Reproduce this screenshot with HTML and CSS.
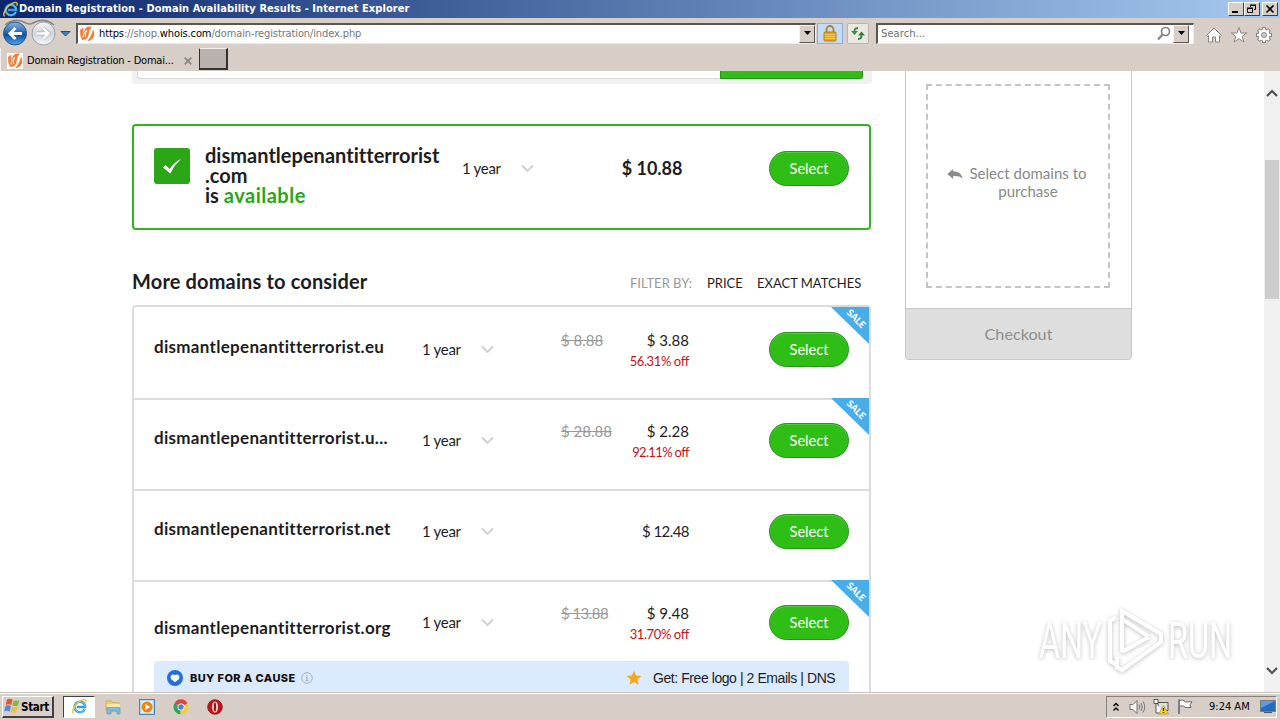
FILE: index.html
```html
<!DOCTYPE html>
<html lang="en">
<head>
<meta charset="utf-8">
<title>Domain Registration - Domain Availability Results</title>
<link rel="stylesheet" href="styles.css">
</head>
<body>
<svg class="defs" width="0" height="0" aria-hidden="true">
  <symbol id="ie" viewBox="0 0 18 18">
    <path d="M14.6 11.6A5.6 5.6 0 1 1 15 9.6H6.2" fill="none" stroke="#2f9be0" stroke-width="2.6"/>
    <path d="M14.6 11.6A5.6 5.6 0 1 1 15 9.6" fill="none" stroke="#8fd6fa" stroke-width=".8"/>
    <path d="M2.8 16.3C-.6 14.6 5.4 4.6 12 2c3.500-1.300 5 .2 3.600 3" fill="none" stroke="#ecc337" stroke-width="1.500"/>
  </symbol>
  <symbol id="whois" viewBox="0 0 16 16">
    <rect width="16" height="16" fill="#fff"/>
    <path d="M1 4 4.500 1.500 4.200 7.500Q6 2 8.500.8L13 .5Q10.500 3 9.700 8 9 12.500 6.500 13.500L3 14Q.8 10 1 4z" fill="#f0803a"/>
    <path d="M14 3.500q1.800 2.500 1.200 6-1 3.500-5 5.500l-1.700-.5q3.500-3.500 5.500-11z" fill="#f0803a"/>
    <path d="M3.800 11.500Q4 8 7.500 4.500 5.800 8 6.500 11" fill="none" stroke="#fff" stroke-width=".9"/>
  </symbol>
  <symbol id="chev" viewBox="0 0 13 9"><path d="m1 1.500 5.500 5.500L12 1.500" fill="none" stroke="#cfcfcf" stroke-width="1.900"/></symbol>
</svg>

<header class="titlebar">
  <svg class="title-icon" width="17" height="17"><use href="#ie"/></svg>
  <span class="title-text">Domain Registration - Domain Availability Results - Internet Explorer</span>
  <div class="win-buttons">
    <span class="win-btn"><svg width="14" height="12"><path d="M3 9h6" stroke="#000" stroke-width="2"/></svg></span>
    <span class="win-btn"><svg width="14" height="12" fill="none" stroke="#000"><path d="M5.500 4V2.500h5v4H9M5 2h6M2.500 5.500h5v4h-5zM2 5h6"/></svg></span>
    <span class="win-btn win-close"><svg width="14" height="12"><path d="m3.500 2.500 7 7m0-7-7 7" stroke="#000" stroke-width="1.700"/></svg></span>
  </div>
</header>

<nav class="navbar">
  <svg class="nav-arrows" width="75" height="30" viewBox="0 0 75 30">
    <defs>
      <linearGradient id="blue" x2="0" y2="1"><stop stop-color="#8ab5e6"/><stop offset=".45" stop-color="#2767b8"/><stop offset=".55" stop-color="#124f9f"/><stop offset="1" stop-color="#4aa5e8"/></linearGradient>
      <linearGradient id="grey" x2="0" y2="1"><stop stop-color="#f8f8f8"/><stop offset=".5" stop-color="#cfd5dc"/><stop offset="1" stop-color="#f5f7fa"/></linearGradient>
    </defs>
    <path d="M5 7Q15-1 26 5q4 2 7 0Q44-1 54 7" fill="none" stroke="#898684" stroke-width="1.600"/>
    <circle cx="15" cy="15.500" r="11.500" fill="url(#blue)" stroke="#315987"/>
    <path d="M22 15.500H10m5.500-5.500-5.500 5.500 5.500 5.500" fill="none" stroke="#fff" stroke-width="3"/>
    <circle cx="43.500" cy="15.500" r="11.500" fill="url(#grey)" stroke="#9a9ea4"/>
    <path d="M36.500 15.500h12M43 10l5.500 5.500L43 21" fill="none" stroke="#a9b0b8" stroke-width="4"/>
    <path d="M36.500 15.500h12M43 10l5.500 5.500L43 21" fill="none" stroke="#fff" stroke-width="2.600"/>
    <path d="M61 13.500h9L65.500 18z" fill="#3f86bd" stroke="#204d78"/>
  </svg>
  <div class="address">
    <svg width="16" height="16"><use href="#whois"/></svg>
    <span class="url"><b>https</b>://shop.<b>whois.com</b>/domain-registration/index.php</span>
    <span class="drop"><svg width="9" height="5"><path d="M1 0h7L4.500 4z"/></svg></span>
  </div>
  <span class="tool lock"><svg width="14" height="17" viewBox="0 0 14 17"><path d="M3.500 8V4.500a3.500 3.500 0 0 1 7 0V8" fill="none" stroke="#a58235" stroke-width="1.800"/><rect x="1" y="7" width="12" height="9" rx="1" fill="#e5a51e" stroke="#ae7b12"/><path d="M1.500 9.500h11m-11 2h11m-11 2h11" stroke="#f6cf60" stroke-width=".8"/></svg></span>
  <span class="tool refresh"><svg width="16" height="15" viewBox="0 0 16 15"><path d="M8 2Q4.500 2 4.500 5.500" fill="none" stroke="#35913a" stroke-width="1.800"/><path d="M1 5h7L4.500 9z" fill="#35913a"/><path d="M8 13q3.500 0 3.500-3.500" fill="none" stroke="#277c2c" stroke-width="1.800"/><path d="M8 9.500h7L11.500 5.500z" fill="#277c2c"/></svg></span>
  <div class="search">
    <span class="search-text">Search...</span>
    <svg width="14" height="15" fill="none"><circle cx="8.500" cy="5.500" r="4" stroke="#858585" stroke-width="1.700"/><path d="m5.500 8.500-4.500 5" stroke="#858585" stroke-width="2.200"/></svg>
    <span class="drop"><svg width="9" height="5"><path d="M1 0h7L4.500 4z"/></svg></span>
  </div>
  <div class="commands">
    <svg width="18" height="18" viewBox="0 0 18 18" fill="#fff" stroke="#858585"><path d="M1.500 9.500 9 2l7.500 7.500-1 1-1-1v6.500h-4v-5h-3v5h-4V9.500l-1 1z"/></svg>
    <svg width="18" height="18" viewBox="0 0 18 18" fill="#fff" stroke="#858585"><path d="m9 1.500 2 5.500h5.700L12.200 10.500l1.700 5.500L9 12.700 4.100 16l1.700-5.500L1.300 7H7z"/></svg>
    <svg width="18" height="18" viewBox="0 0 18 18"><path d="M9 1v16M1 9h16M3.300 3.300l11.400 11.400m0-11.400L3.300 14.700" stroke="#858585" stroke-width="4"/><circle cx="9" cy="9" r="6.400" fill="#858585"/><path d="M9 2v14M2 9h14M4 4l10 10m0-10L4 14" stroke="#fff" stroke-width="2.200"/><circle cx="9" cy="9" r="5.500" fill="#fff"/><circle cx="9" cy="9" r="2.500" fill="#d6cec7" stroke="#858585"/></svg>
  </div>
</nav>

<div class="tabs">
  <div class="tab">
    <svg width="16" height="16"><use href="#whois"/></svg>
    <span class="tab-text">Domain Registration - Domai...</span>
    <svg class="tab-close" width="8" height="8"><path d="m.7.7 6.600 6.600m0-6.600L.7 7.300" stroke="#8a8785" stroke-width="1.900"/></svg>
  </div>
  <span class="new-tab"></span>
</div>

<div class="viewport">
  <main class="results">
    <div class="searchbar"><div class="searchbar-input"></div><div class="searchbar-btn"></div></div>

    <section class="match">
      <span class="match-check"><svg width="20" height="17" viewBox="0 0 20 17"><path d="M1 9.500 3.500 7l4.200 4Q12 4.500 19 .8 12.500 7 8.300 15.500z" fill="#fff"/></svg></span>
      <div class="match-name">dismantlepenantitterrorist<br>.com<br>is <span class="available">available</span></div>
      <div class="term"><span>1 year</span><svg width="13" height="9"><use href="#chev"/></svg></div>
      <div class="match-price">$ 10.88</div>
      <button class="select">Select</button>
    </section>

    <div class="list-head">
      <h2>More domains to consider</h2>
      <span class="filter-label">FILTER BY:</span>
      <span class="filter-price">PRICE</span>
      <span class="filter-exact">EXACT MATCHES</span>
    </div>

    <section class="list">
      <div class="row">
        <div class="name">dismantlepenantitterrorist.eu</div>
        <div class="term"><span>1 year</span><svg width="13" height="9"><use href="#chev"/></svg></div>
        <div class="prices"><s>$ 8.88</s><span class="price">$ 3.88</span><span class="off">56.31% off</span></div>
        <button class="select">Select</button>
        <span class="sale"><span>SALE</span></span>
      </div>
      <div class="row">
        <div class="name">dismantlepenantitterrorist.u...</div>
        <div class="term"><span>1 year</span><svg width="13" height="9"><use href="#chev"/></svg></div>
        <div class="prices"><s>$ 28.88</s><span class="price">$ 2.28</span><span class="off narrow">92.11% off</span></div>
        <button class="select">Select</button>
        <span class="sale"><span>SALE</span></span>
      </div>
      <div class="row">
        <div class="name">dismantlepenantitterrorist.net</div>
        <div class="term"><span>1 year</span><svg width="13" height="9"><use href="#chev"/></svg></div>
        <div class="prices single"><span class="price tight">$ 12.48</span></div>
        <button class="select">Select</button>
      </div>
      <div class="row">
        <div class="name low">dismantlepenantitterrorist.org</div>
        <div class="term"><span>1 year</span><svg width="13" height="9"><use href="#chev"/></svg></div>
        <div class="prices"><s class="tight">$ 13.88</s><span class="price">$ 9.48</span><span class="off">31.70% off</span></div>
        <button class="select">Select</button>
        <span class="sale"><span>SALE</span></span>
      </div>
      <div class="cause">
        <svg width="16" height="16" viewBox="0 0 16 16"><circle cx="8" cy="8" r="8" fill="#2470d8"/><path d="M8 12.200 4 9Q2.800 6.500 4.500 5 6.300 4 8 5 9.700 4 11.500 5q1.700 1.500.5 4z" fill="#fff"/></svg>
        <b>BUY FOR A CAUSE</b>
        <svg class="info" width="12" height="12" fill="none" stroke="#9aaac3"><circle cx="6" cy="6" r="5.300" stroke-width=".9"/><path d="M6 2.800v1.400M4.800 5.500H6v3M4.600 8.700h2.800"/></svg>
        <svg class="star" width="16" height="16" viewBox="0 0 16 16"><path d="m8 .8 2.100 4.800 5.200.5-3.900 3.500 1.100 5.100L8 12l-4.500 2.700 1.100-5.100L.7 6.100l5.200-.5z" fill="#f9a61a"/></svg>
        <span class="perks">Get: Free logo | 2 Emails | DNS</span>
      </div>
    </section>
  </main>

  <aside class="cart">
    <div class="cart-empty">
      <svg width="16" height="11" viewBox="0 0 16 11"><path d="M6 0v2.300q8 0 9.700 7.200Q12 6.600 6 7.200V10L.3 5z" fill="#8a8a8a"/></svg>
      <p>Select domains to purchase</p>
    </div>
    <div class="checkout">Checkout</div>
  </aside>

  <div class="scrollbar">
    <svg width="12" height="8"><path d="M1 7 6 2l5 5" fill="none" stroke="#505050" stroke-width="2.200"/></svg>
    <span class="thumb"></span>
    <svg class="down" width="12" height="8"><path d="m1 1 5 5 5-5" fill="none" stroke="#505050" stroke-width="2.200"/></svg>
  </div>

  <svg class="watermark" width="216" height="76" viewBox="0 0 216 76">
    <g fill="#fff" font-family="Roboto, sans-serif" font-size="50" font-weight="400">
      <text x="8" y="55" textLength="63" lengthAdjust="spacingAndGlyphs">ANY</text>
      <text x="137" y="55" textLength="64" lengthAdjust="spacingAndGlyphs">RUN</text>
    </g>
    <g fill="none" stroke="#fff" stroke-width="4">
      <path d="M91 49V8l39 23v8L91 67l-5-3V54M91 16l26 17M91 49l27-15M85 14l-6 4v40l7 4"/>
    </g>
  </svg>
</div>

<footer class="taskbar">
  <div class="start">
    <svg width="17" height="16" viewBox="0 0 17 16"><path d="M3 1.500q3-1.500 5.500.3L7.300 7Q4.500 5.500 1.700 7z" fill="#e2582b"/><path d="M9.500 2.200q3 1.300 6 0L14 7.500q-3 1.200-5.700 0z" fill="#7fb944"/><path d="M1.500 8q3-1.500 5.500.2l-1.300 5.200Q3 12 .2 13.500z" fill="#4e8bd8"/><path d="M8 8.700q3 1.300 5.800 0l-1.500 5.300q-3 1.200-5.600 0z" fill="#f2bf33"/></svg>
    <b>Start</b>
  </div>
  <div class="task active"><svg width="17" height="17"><use href="#ie"/></svg></div>
  <svg class="ql" width="16" height="16" viewBox="0 0 16 16"><path d="M1 2h5l1 1.500h7V12H1z" fill="#e9cf72" stroke="#c5a74d" stroke-width=".7"/><path d="M2 5h13v4H2z" fill="#f7e9ae"/><path d="M2 8.500h13V15h-3v-3H6v3H2z" fill="#7bbbe0" stroke="#4c95c4" stroke-width=".6"/></svg>
  <svg class="ql" width="16" height="16" viewBox="0 0 16 16"><rect x=".5" y=".5" width="15" height="15" fill="#b8d5ed" stroke="#4d82b5"/><rect x="2.500" y="2" width="11" height="12" fill="#e8f1f8"/><circle cx="8" cy="8" r="5.500" fill="#f08312"/><path d="m6.300 5 5 3-5 3z" fill="#fff"/></svg>
  <svg class="ql" width="16" height="16" viewBox="0 0 16 16"><path d="M8 8 1.500 4.300A7.200 7.200 0 0 1 14.500 4.500z" fill="#dc4639"/><path d="M8 8 1.500 4.300A7.200 7.200 0 0 0 7.500 15.200z" fill="#35a353"/><path d="M8 8l6.500-3.500A7.200 7.200 0 0 1 7.500 15.200z" fill="#f8cb3a"/><circle cx="8" cy="8" r="3.500" fill="#fff"/><circle cx="8" cy="8" r="2.700" fill="#4285dc"/></svg>
  <svg class="ql" width="16" height="16" viewBox="0 0 16 16"><circle cx="8" cy="8" r="7.300" fill="#c01818" stroke="#801010" stroke-width=".8"/><ellipse cx="8" cy="8" rx="2.900" ry="5.500" fill="#f7eaea"/><ellipse cx="8" cy="8" rx="1.200" ry="4.800" fill="#a81010"/></svg>
  <div class="tray">
    <svg width="8" height="10" fill="none" stroke="#000" stroke-width="1.400"><path d="m1.500 4 2.500-2.500L6.500 4m-5 4.500L4 6l2.500 2.500"/></svg>
    <svg class="t-sound" width="17" height="14" fill="none" stroke="#6d6d6d"><path d="M1 4.500h3l4-4v13l-4-4H1z" fill="#fff"/><path d="M10 4.500q1.500 2.500 0 5M12 3q2.500 4 0 8m2-9.500q3.500 5.500 0 11" stroke-width=".9"/></svg>
    <svg class="t-net" width="16" height="16" viewBox="0 0 16 16"><path d="M5 3.500h10v8H5z" fill="#d8dee4" stroke="#555"/><path d="M1 .5h4v4H1zM3 4.500V14h8" fill="#fff" stroke="#555"/><path d="M10.500 6.500 15.500 15h-10z" fill="#ffd02c" stroke="#b28f1a" stroke-width=".7"/><path d="M10.500 9v3m0 1v1" stroke="#222" stroke-width="1.300"/></svg>
    <svg class="t-flag" width="17" height="15" viewBox="0 0 17 15" fill="#fff" stroke="#686868"><path d="M2 1.500q4-1.500 6.500 1.300H15l-2 3 1 2.700H8.500L6.500 7H3"/><path d="M2 .5V15" stroke-width="1.600"/></svg>
    <span class="clock">9:24 AM</span>
    <svg class="t-screen" width="16" height="13"><rect x=".5" y=".5" width="15" height="11" fill="#276bc0" stroke="#747d8a"/><path d="M1 1h14L1 8z" fill="#5b9de0"/><path d="M4 12.500h8" stroke="#555"/></svg>
  </div>
</footer>
</body>
</html>
```
FILE: styles.css
```css
* { box-sizing: border-box; }
body {
  margin: 0; width: 1280px; height: 720px; overflow: hidden;
  display: flex; flex-direction: column; background: #fff; color: #1d1d1f;
  font-family: Lato, "Open Sans", sans-serif;
  font-variant-ligatures: none;
}
svg { display: block; flex: none; }
.defs { position: absolute; }

.titlebar {
  height: 18px; flex: none; display: flex; align-items: center; padding: 0 2px;
  background: linear-gradient(90deg, #0b266d, #a6caf0);
}
.title-text {
  font: bold 11px/18px "DejaVu Sans Condensed", "DejaVu Sans", sans-serif;
  color: #fff; white-space: nowrap; letter-spacing: .07px;
}
.win-buttons { margin-left: auto; display: flex; }
.win-btn {
  width: 16px; height: 14px; background: #d6cec7;
  border: 1px solid; border-color: #fff #404040 #404040 #fff;
}
.win-close { margin-left: 2px; }

.navbar {
  height: 30px; flex: none; display: flex; align-items: center; background: #d6cec7;
  font: 11px/16px "DejaVu Sans Condensed", "DejaVu Sans", sans-serif;
}
.address {
  margin-left: 1px; width: 740px; height: 21px; display: flex; align-items: center; padding-left: 1px;
  background: #fff; border: 1px solid; border-color: #5c5652 #efebe7 #efebe7 #5c5652; border-width: 2px 1px 1px 2px;
}
.url { margin-left: 4px; color: #777; letter-spacing: -.12px; white-space: nowrap; }
.url b { font-weight: normal; color: #000; }
.drop {
  margin-left: auto; width: 16px; height: 18px; display: flex; align-items: center; justify-content: center;
  background: #d6cec7; border: 1px solid; border-color: #f4f1ee #5c5652 #5c5652 #f4f1ee;
}
.tool { display: flex; align-items: center; justify-content: center; height: 21px; }
.lock { margin-left: 1px; width: 26px; background: #c5dcf7; border: 1px solid #86b2e6; }
.refresh { margin-left: 4px; width: 22px; background: #ebe8e4; border: 1px solid #bbb4ae; border-radius: 2px; }
.search {
  margin-left: 7px; width: 318px; height: 21px; display: flex; align-items: center; padding: 0 4px 0 3px;
  background: #fff; border: 1px solid; border-color: #5c5652 #efebe7 #efebe7 #5c5652; border-width: 2px 1px 1px 2px;
}
.search-text { color: #6d6d6d; margin-right: auto; letter-spacing: .1px; }
.search .drop { margin-left: 2px; }
.commands { display: flex; gap: 7px; margin-left: 11px; padding-top: 4px; }

.tabs { height: 23px; flex: none; display: flex; background: #d6cec7; }
.tab {
  width: 198px; height: 23px; display: flex; align-items: center; padding: 2px 0 0 6px;
  border-left: 1px solid #f4f1ee;
  font: 11px/16px "DejaVu Sans Condensed", "DejaVu Sans", sans-serif; color: #000;
}
.tab-text { margin-left: 4px; width: 157px; white-space: nowrap; letter-spacing: -.2px; }
.new-tab {
  margin-left: 1px; width: 29px; height: 22px; background: #b9b1ab;
  border: 1px solid; border-color: #f4f1ee #35302d #35302d #35302d; border-width: 1px 2px 2px 1px;
}

.viewport { height: 621px; flex: none; position: relative; display: flex; overflow: hidden; }
.results { width: 739px; margin-left: 132px; flex: none; }
.searchbar { height: 13px; width: 740px; padding: 0 9px 5px 5px; background: #f1f1f1; display: flex; border-radius: 0 0 3px 3px; }
.searchbar-input { width: 583px; background: #fff; border: 1px solid #d8d8d8; border-top: 0; border-right: 0; border-radius: 0 0 0 3px; }
.searchbar-btn { width: 143px; background: #2fbe16; border: 1px solid #26921a; border-top: 0; border-radius: 0 0 3px 0; }

.match {
  margin-top: 40px; height: 106px; border: 2px solid #31b41f; border-radius: 4px;
  display: flex; align-items: flex-start; padding: 22px 20px 0;
}
.match-check {
  width: 36px; height: 36px; flex: none; border-radius: 3px; background: #2aa616;
  display: flex; align-items: center; justify-content: center;
}
.match-name { margin: -3px 0 0 15px; width: 257px; font-weight: 700; font-size: 20px; line-height: 20px; letter-spacing: .02px; white-space: nowrap; }
.available { color: #2aa616; letter-spacing: .5px; }
.term { display: flex; align-items: center; justify-content: space-between; width: 71.5px; height: 20px; font-size: 15px; line-height: 20px; letter-spacing: -.3px; }
.term span { padding-bottom: 1px; }
.match .term { margin-top: 10px; }
.match-price { width: 149px; margin-top: 10px; text-align: right; font-weight: 700; font-size: 18px; line-height: 20px; }
.select {
  width: 80px; height: 35px; padding: 0 0 1px; border: 1px solid #259416; border-radius: 18px;
  background: #2fbe16; box-shadow: inset 0 1px #57cc43; color: #fff; font: 14.6px Lato, sans-serif;
}
.match .select { margin: 3px 0 0 auto; }

.list-head { height: 75px; padding-top: 41px; display: flex; font-size: 13px; line-height: 24px; white-space: nowrap; }
.list-head h2 { margin: -2px 0 0; width: 498px; font-size: 20px; line-height: 24px; letter-spacing: .15px; }
.filter-label { width: 77px; color: #999; }
.filter-price { width: 50px; }

.list { border: 2px solid #dcdcdc; border-radius: 4px 4px 0 0; height: 420px; }
.row {
  position: relative; height: 91px; padding: 25px 20px 0;
  display: grid; grid-template-columns: 268px 139px 128px 80px; align-items: start;
}
.row + .row { box-shadow: inset 0 2px #dcdcdc; }
.name { margin-top: 3px; font-weight: 700; font-size: 17px; line-height: 24px; letter-spacing: .3px; white-space: nowrap; }
.low { margin-top: 11px; }
.row .term { margin-top: 7px; }
.prices { margin-top: -2px; display: grid; grid-template-columns: 1fr 1fr; font-size: 15px; line-height: 20px; white-space: nowrap; }
.prices s { color: #999; }
.price { grid-column: 2; text-align: right; }
.tight { letter-spacing: -.55px; }
.single { margin-top: 7px; }
.off { grid-column: 1 / 3; padding-top: 1px; text-align: right; font-size: 13px; letter-spacing: -.4px; color: #c41212; }
.narrow { letter-spacing: -.65px; }
.row .select { margin-left: 80px; }
.sale { position: absolute; top: 0; right: 0; width: 38px; height: 37px; background: #49ade9; clip-path: polygon(0 0, 100% 0, 100% 100%); }
.sale span { position: absolute; left: 12px; top: 6px; width: 26px; text-align: center; transform: rotate(45deg); font-weight: 900; font-size: 9.5px; line-height: 12px; color: #fff; }
.cause { margin: -10px 20px 0; height: 48px; padding: 9px 14px 0 13px; display: flex; align-items: flex-start; background: #dceafd; border-radius: 4px; }
.cause b { margin-left: 7px; width: 106px; font: 800 11px/16px Inter, sans-serif; letter-spacing: .4px; color: #111; white-space: nowrap; }
.info { margin: 2px 0 0 5px; }
.star { margin-left: auto; }
.perks { margin-left: 11px; font: 14px/16px "Liberation Sans", Arial, sans-serif; width: 182px; letter-spacing: -.43px; white-space: nowrap; }

.cart { margin-left: 34px; width: 227px; height: 289px; border: 1px solid #c8c8c8; border-top: 0; border-radius: 0 0 4px 4px; flex: none; }
.cart-empty { margin: 13px 0 0 20px; width: 184px; height: 204px; border: 2px dashed #c4c4c4; display: flex; padding: 79px 15px 0 19px; color: #888; }
.cart-empty svg { margin-top: 4px; }
.cart-empty p { margin: -1px 0 0 1px; width: 128px; text-align: center; font-size: 15px; line-height: 18px; letter-spacing: .03px; }
.checkout { margin-top: 20px; height: 51px; border-top: 1px solid #c8c8c8; background: #dedede; color: #8e8e8e; text-align: center; font-size: 16.2px; line-height: 50px; border-radius: 0 0 3px 3px; }

.scrollbar { margin-left: auto; width: 16px; background: #f0f0f0; display: flex; flex-direction: column; align-items: center; padding: 18px 1px 17px 1px; }
.thumb { margin-top: 63px; width: 14px; height: 139px; background: #cdcdcd; }
.down { margin-top: auto; }
.watermark { position: absolute; left: 1031px; top: 532px; filter: drop-shadow(0 1px 2px #bdbdbd); }

.taskbar { height: 28px; flex: none; display: flex; align-items: center; background: #d6cec7; border-top: 1px solid #c9c2b8; box-shadow: inset 0 1px #fff; font: 11px/16px "DejaVu Sans Condensed", "DejaVu Sans", sans-serif; }
.start { margin-left: 2px; width: 52px; height: 22px; display: flex; align-items: center; padding-left: 1px; border: 1px solid; border-color: #fff #404040 #404040 #fff; border-width: 1px 2px 2px 1px; }
.start b { letter-spacing: -.3px; font-size: 11.5px; color: #000; padding-top: 1px; }
.task { margin-left: 9px; width: 32px; height: 22px; display: flex; align-items: center; justify-content: center; background: #fff; border: 1px solid; border-color: #404040 #fff #fff #404040; }
.ql { margin-left: 18px; }
.task + .ql { margin-left: 10px; }
.tray { margin-left: auto; margin-right: 3px; width: 171px; height: 22px; display: flex; align-items: center; padding-left: 5px; border: 1px solid; border-color: #87817b #fff #fff #87817b; color: #000; }
.t-sound { margin-left: 9px; }
.t-net { margin-left: 7px; }
.t-flag { margin-left: 8px; }
.clock { margin-left: 15px; width: 51px; white-space: nowrap; }
```
